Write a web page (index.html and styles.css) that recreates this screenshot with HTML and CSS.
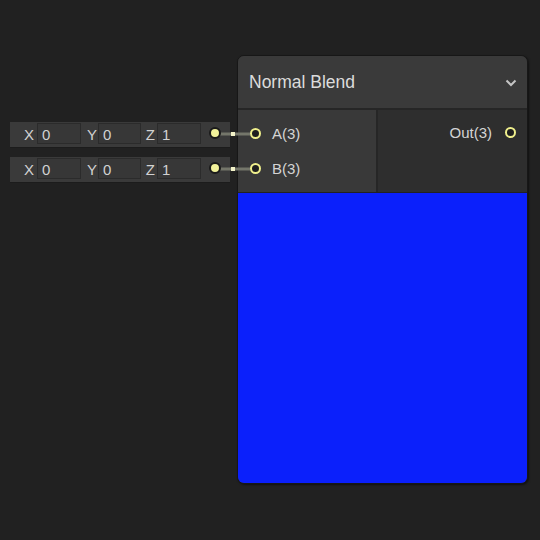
FILE: index.html
```html
<!DOCTYPE html>
<html>
<head>
<meta charset="utf-8">
<link rel="stylesheet" href="styles.css">
</head>
<body>
<div class="canvas">
  <div class="inputs">
    <div class="vec">
      <span class="lbl lbl-x">X</span><span class="fld fld-a">0</span>
      <span class="lbl lbl-y">Y</span><span class="fld fld-b">0</span>
      <span class="lbl lbl-z">Z</span><span class="fld fld-a">1</span>
      <span class="dot"></span>
    </div>
    <div class="vec">
      <span class="lbl lbl-x">X</span><span class="fld fld-a">0</span>
      <span class="lbl lbl-y">Y</span><span class="fld fld-b">0</span>
      <span class="lbl lbl-z">Z</span><span class="fld fld-a">1</span>
      <span class="dot"></span>
    </div>
  </div>
  <div class="node">
    <div class="header">
      <span class="title">Normal Blend</span>
      <svg class="chev" width="12" height="8" viewBox="0 0 12 8"><path d="M1.5 1.5 L6 6 L10.5 1.5" fill="none" stroke="#c4c4c4" stroke-width="2"/></svg>
    </div>
    <div class="ports">
      <div class="col-in">
        <div class="row"><span class="port"></span><span class="pname">A(3)</span></div>
        <div class="row"><span class="port"></span><span class="pname">B(3)</span></div>
      </div>
      <div class="col-out">
        <div class="row row-out"><span class="pname">Out(3)</span><span class="port"></span></div>
      </div>
    </div>
    <div class="preview"></div>
  </div>
  <svg class="wires" width="540" height="540" viewBox="0 0 540 540">
    <line x1="218" y1="134" x2="250" y2="134" stroke="#74766a" stroke-width="3"/>
    <line x1="218" y1="169" x2="250" y2="169" stroke="#74766a" stroke-width="3"/>
    <rect x="231" y="132" width="4" height="4" fill="#f2f2c8"/>
    <rect x="231" y="167" width="4" height="4" fill="#f2f2c8"/>
  </svg>
</div>
</body>
</html>
```
FILE: styles.css
```css
html, body {
  margin: 0;
  padding: 0;
  background: #212121;
}
.canvas {
  position: relative;
  width: 540px;
  height: 540px;
  box-sizing: border-box;
  padding: 55px 0 0 10px;
  display: flex;
  align-items: flex-start;
  font-family: "Liberation Sans", Arial, sans-serif;
  color: #d2d2d2;
}
.inputs {
  margin-top: 67px;
  width: 220px;
  display: flex;
  flex-direction: column;
  gap: 10px;
}
.vec {
  height: 25px;
  background: #3a3a3a;
  box-shadow: 0 1px 0 #1c1c1c;
  display: flex;
  align-items: flex-start;
  font-size: 15px;
  position: relative;
}
.lbl {
  height: 22px;
  line-height: 24px;
  text-align: right;
  box-sizing: border-box;
  margin-top: 1px;
}
.lbl-x { width: 27px; padding-right: 3px; }
.lbl-y { width: 17px; padding-right: 1px; }
.lbl-z { width: 16px; padding-right: 2px; }
.fld {
  height: 21px;
  margin-top: 1px;
  box-sizing: border-box;
  background: #373737;
  border: 1px solid #2b2b2b;
  padding-left: 4px;
  line-height: 21px;
}
.fld-a { width: 44px; }
.fld-b { width: 43px; }
.dot {
  width: 8px;
  height: 8px;
  margin: 5px 0 0 8px;
  border-radius: 50%;
  background: #f2f29a;
  border: 2px solid #1a1a1a;
  position: relative;
  z-index: 2;
}
.node {
  margin-left: 7px;
  width: 291px;
  height: 429px;
  box-sizing: border-box;
  border: 1px solid #171717;
  border-radius: 7px;
  background: #2e2e2e;
  overflow: hidden;
  display: flex;
  flex-direction: column;
  box-shadow: 1px 1px 2px rgba(0,0,0,0.5);
}
.header {
  height: 52px;
  flex: none;
  background: #3a3a3a;
  border-bottom: 2px solid #262626;
  display: flex;
  align-items: center;
  justify-content: space-between;
  padding: 0 10px 0 11px;
}
.title {
  font-size: 17.5px;
  color: #dcdcdc;
  margin-top: 1px;
}
.chev { margin-top: 2px; }
.ports {
  height: 82px;
  flex: none;
  display: flex;
  border-bottom: 1px solid #222;
}
.col-in {
  width: 138px;
  background: #393939;
  border-right: 2px solid #262626;
  padding-top: 6px;
}
.col-out {
  flex: 1;
  background: #2e2e2e;
  padding-top: 5px;
}
.row {
  height: 35px;
  display: flex;
  align-items: center;
  font-size: 15px;
  color: #d4d4d4;
}
.col-in .row { padding-left: 12px; }
.row-out { justify-content: flex-end; padding-right: 11px; }
.port {
  width: 11px;
  height: 11px;
  box-sizing: border-box;
  border-radius: 50%;
  border: 2px solid #efef8c;
  background: #1f1f1f;
}
.col-in .port { margin-right: 11px; }
.row-out .port { margin-left: 13px; }
.preview {
  flex: 1;
  background: #0b20fb;
}
.wires {
  position: absolute;
  left: 0;
  top: 0;
  pointer-events: none;
}
```
